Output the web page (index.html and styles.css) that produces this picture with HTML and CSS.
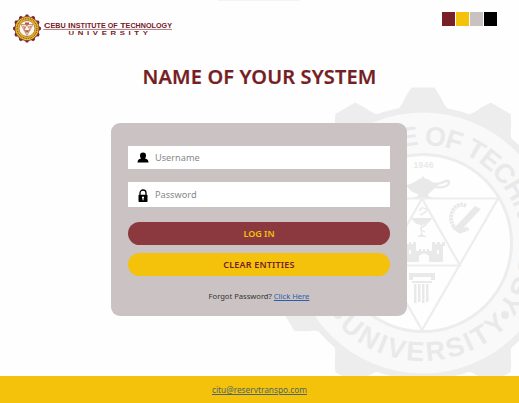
FILE: index.html
```html
<!DOCTYPE html>
<html lang="en">
<head>
<meta charset="utf-8">
<title>Name of Your System</title>
<link rel="stylesheet" href="styles.css">
</head>
<body>
<div class="page">
  <svg class="seal" viewBox="-160 -160 320 320" aria-hidden="true">
    <defs>
      <path id="tooth" d="M-27-132C-22-136-20-141-17-147L-11.500-155.500H11.500L17-147C20-141 22-136 27-132Z"/>
      <g id="gear">
        <circle r="137"/>
        <use href="#tooth"/>
        <use href="#tooth" transform="rotate(30)"/>
        <use href="#tooth" transform="rotate(60)"/>
        <use href="#tooth" transform="rotate(90)"/>
        <use href="#tooth" transform="rotate(120)"/>
        <use href="#tooth" transform="rotate(150)"/>
        <use href="#tooth" transform="rotate(180)"/>
        <use href="#tooth" transform="rotate(210)"/>
        <use href="#tooth" transform="rotate(240)"/>
        <use href="#tooth" transform="rotate(270)"/>
        <use href="#tooth" transform="rotate(300)"/>
        <use href="#tooth" transform="rotate(330)"/>
      </g>
      <path id="upper" d="M0 98A98 98 0 0 1 0-98A98 98 0 0 1 0 98"/>
      <path id="lower" d="M-118 0A118 118 0 0 0 118 0"/>
    </defs>
    <use href="#gear" fill="#ededed"/>
    <circle r="130.500" fill="#f9f9f9"/>
    <circle r="88.500" fill="#fefefe" stroke="#ededed" stroke-width="3"/>
    <g class="seal-text">
      <text font-size="27"><textPath href="#upper" startOffset="95.500" textLength="434">CEBU INSTITUTE OF TECHNOLOGY</textPath></text>
      <text font-size="27"><textPath href="#lower" startOffset="92" textLength="188">UNIVERSITY</textPath></text>
      <text class="year" x="-9.500" y="-75" textLength="20">1946</text>
    </g>
    <g fill="#e9e9e9">
      <circle cx="82" cy="72" r="4"/><circle cx="-85" cy="72" r="4"/>
      <path d="M-17-58Q-11-59-7-62Q-3-65-1-65L0-68L1-65Q6-64 9-61Q14-59 20-62Q28-66 27-59Q22-53 12-55Q7-50 5-49V-47L11-45H-11L-5-47V-49Q-13-51-17-58ZM19-59Q15-58 14-57Q22-56 25-60Q24-62 19-59Z"/>
      <path d="M-17 19V2H-19V-1H-16V1H-14V-1H-12V1H-10V-1H-7V8H-4V6H-2V8H0V6H2V8H4V6H6V8H9V-1H12V1H14V-1H17V1H19V-1H22V3H20V19H6V13Q1 8-4 13V19ZM-14 7V11H-12V7ZM14 7V11H16V7Z"/>
      <path d="M-14 30H12V37H8V34H-10V37H-14ZM-11 38H9V40H-11ZM-9 41V60H-6.500V41ZM-5 41V59H-2.500V41ZM-1 41V60H1.500V41ZM3 41V59H5.500V41Z"/>
      <path d="M-12-25H9Q6-18-1-18V-9L4-6H-6L-2-9V-18Q-9-19-12-25Z"/>
      <path d="M34-18L52-37L58-34L41-16L44-14L37-9L29-15Z"/>
    </g>
    <g fill="none" stroke="#ededed" stroke-width="2.200">
      <path d="M-77-44.500H75L-1 87ZM-1-44.500L-39 22.500H37Z"/>
    </g>
    <g fill="none" stroke="#e9e9e9">
      <path d="M-3-28Q6-32 3-34Q-3-37-3-32M-4-23Q7-20 1-17Q-6-14 2-11" stroke-width="1.500"/>
      <path d="M43-37A10.500 13 0 1 0 45-15" stroke-width="4" stroke-dasharray="2.600 .7"/>
    </g>
  </svg>
  <div class="tab-edge"></div>

  <header class="top">
    <svg class="brand" width="162" height="32" viewBox="0 0 162 32" role="img" aria-label="Cebu Institute of Technology University">
      <g transform="translate(15 16.500)">
        <use href="#gear" fill="#7b2830" transform="scale(.09)"/>
        <circle r="11.600" fill="#f2c62d"/>
        <circle r="9.900" fill="none" stroke="#84601f" stroke-width="1.500" stroke-dasharray="1 .7"/>
        <circle r="8" fill="#fff8e8" stroke="#a55b25" stroke-width=".8"/>
        <path d="M-6-4H6L0 7ZM0-4L-3 2H3Z" fill="#f6e5d0" stroke="#b97365" stroke-width=".7"/>
        <path d="M-2-6H2V-4H-2ZM-1.500 2H1.500V4H-1.500Z" fill="#a75b52"/>
        <path d="M-4-3L-1-1L-3 1ZM2-2L5-3L3 0Z" fill="#c4817a"/>
      </g>
      <g class="brand-text">
        <text x="32" y="16" font-size="8" textLength="128" lengthAdjust="spacingAndGlyphs">C<tspan font-size="6.500">EBU</tspan> I<tspan font-size="6.500">NSTITUTE OF</tspan> T<tspan font-size="6.500">ECHNOLOGY</tspan></text>
        <path d="M31.500 17.400H160" stroke="#97565d" stroke-width=".8"/>
        <g transform="translate(56.500 23.300) scale(1.250 1)">
          <text font-size="6.200" textLength="63.500">UNIVERSITY</text>
        </g>
      </g>
    </svg>
    <div class="palette">
      <i class="maroon"></i><i class="gold"></i><i class="gray"></i><i class="black"></i>
    </div>
  </header>

  <h1>NAME OF YOUR SYSTEM</h1>

  <main class="card">
    <div class="field user">
      <svg width="12" height="12" viewBox="0 0 12 12"><path d="M6 .5A3 3 0 0 1 9 3.500Q9 5.500 8 6.500Q11.500 7 11.500 10.500H.5Q.5 7 4 6.500Q3 5.500 3 3.500A3 3 0 0 1 6 .5Z"/></svg>
      <span>Username</span>
    </div>
    <div class="field pass">
      <svg width="12" height="14" viewBox="0 0 12 14"><path d="M3 6V4A3 3 0 0 1 9 4V6" fill="none" stroke="#000" stroke-width="1.300"/><rect x="1.500" y="5.800" width="9" height="7.200" rx=".7"/><path d="M6 7.500A1 1 0 0 1 6.500 9.400V11.300H5.500V9.400A1 1 0 0 1 6 7.500Z" fill="#fff"/></svg>
      <span>Password</span>
    </div>
    <div class="button login">LOG IN</div>
    <div class="button clear">CLEAR ENTITIES</div>
    <p class="forgot">Forgot Password? <a href="#">Click Here</a></p>
  </main>

  <footer><a href="#">citu@reservtranspo.com</a></footer>
</div>
</body>
</html>
```
FILE: styles.css
```css
* { box-sizing: border-box; }

body { margin: 0; }

.page {
  position: relative;
  width: 519px;
  height: 403px;
  overflow: hidden;
  display: flex;
  flex-direction: column;
  align-items: center;
  background: #fefefe;
  font-family: "Noto Sans", sans-serif;
}

.seal {
  position: absolute;
  left: 263.2px;
  top: 82.5px;
  width: 320px;
  height: 320px;
}

.seal-text {
  font-family: "Liberation Sans", sans-serif;
  font-weight: bold;
  fill: #e9e9e9;
}

.year { font-size: 8.500px; }

.tab-edge {
  position: absolute;
  left: 218px;
  top: 0;
  width: 82px;
  height: 1px;
  background: #f4f4f4;
}

.top {
  align-self: stretch;
  height: 66px;
  padding: 12px 22px 0 12px;
  display: flex;
  justify-content: space-between;
  align-items: flex-start;
}

.brand-text {
  font-family: "Liberation Sans", sans-serif;
  font-weight: bold;
  fill: #752028;
}

.palette { display: flex; gap: 1px; }
.palette i { width: 13px; height: 13.500px; }
.maroon { background: #782027; }
.gold { background: #f4c20b; }
.gray { background: #cac1c2; }
.black { background: #000; }

h1 {
  margin: 0;
  height: 57px;
  line-height: 22px;
  font-size: 20px;
  font-weight: 600;
  letter-spacing: .13px;
  -webkit-text-stroke: .2px #751e24;
  color: #751e24;
  white-space: nowrap;
}

.card {
  position: relative;
  flex: none;
  width: 295.500px;
  height: 192.500px;
  margin-right: 1px;
  padding: 23px 16.750px 0;
  border-radius: 9px;
  background: #cac2c3;
}

.field {
  display: flex;
  align-items: center;
  gap: 6px;
  padding-left: 9px;
  background: #fff;
  color: #888;
  font-size: 9.200px;
}

.user { height: 23px; margin-bottom: 13px; }
.pass { height: 24.500px; margin-bottom: 15.500px; }
.pass svg { margin-top: 3px; }

.button {
  display: flex;
  align-items: center;
  justify-content: center;
  border-radius: 12px;
  font-size: 9px;
  font-weight: 600;
}

.login { height: 23px; margin-bottom: 8px; background: #8b393f; color: #f4c20b; }
.clear { height: 22.500px; letter-spacing: .17px; background: #f4c20b; color: #751e24; }

.forgot {
  margin: 13.500px 0 0;
  line-height: 14px;
  text-align: center;
  font-size: 7.600px;
  color: #333;
}

a { color: #2d5eaa; text-decoration: underline; }

footer {
  position: relative;
  align-self: stretch;
  height: 27px;
  margin-top: auto;
  display: flex;
  align-items: center;
  justify-content: center;
  background: #f4c20b;
  font-size: 8.300px;
}

footer a { color: #4d6670; }
```
